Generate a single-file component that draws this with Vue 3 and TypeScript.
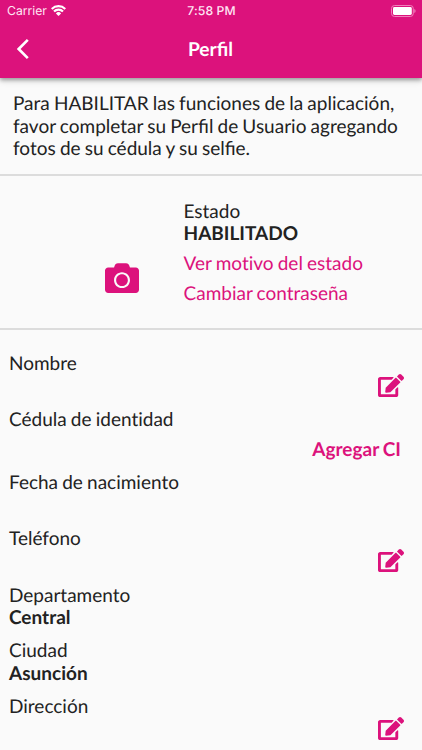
<script setup lang="ts">
interface Field {
  key: string
  label: string
  value?: string
  editable?: boolean
  action?: string
}

const fields: Field[] = [
  { key: 'nombre', label: 'Nombre', editable: true },
  { key: 'cedula', label: 'Cédula de identidad', action: 'Agregar CI' },
  { key: 'nacimiento', label: 'Fecha de nacimiento' },
  { key: 'telefono', label: 'Teléfono', editable: true },
  { key: 'departamento', label: 'Departamento', value: 'Central' },
  { key: 'ciudad', label: 'Ciudad', value: 'Asunción' },
  { key: 'direccion', label: 'Dirección', editable: true },
]
</script>

<template>
  <div class="screen">
    <header class="header">
      <div class="status">
        <div class="carrier">
          <span>Carrier</span>
          <svg class="wifi" viewBox="0 0 15 11" aria-hidden="true">
            <path d="M0.7 4A9.7 9.7 0 0 1 14.3 4M3 6.5A6.5 6.5 0 0 1 12 6.5" />
            <path class="dot" d="M7.5 11L4.9 8.4A3.7 3.7 0 0 1 10.1 8.4Z" />
          </svg>
        </div>
        <span class="time">7:58 PM</span>
        <svg class="battery" viewBox="0 0 25 12" aria-hidden="true">
          <rect class="shell" x="0.5" y="0.5" width="21.8" height="11" rx="3" />
          <rect class="charge" x="2" y="2" width="18.8" height="8" rx="1.4" />
          <path class="tip" d="M23.4 4V8C24.9 7.3 24.9 4.7 23.4 4Z" />
        </svg>
      </div>
      <div class="nav">
        <button class="back" aria-label="Atrás">
          <svg viewBox="0 0 12 20" aria-hidden="true"><path d="M10.8 0.9L1.7 10L10.8 19.1" /></svg>
        </button>
        <h1>Perfil</h1>
      </div>
    </header>

    <p class="notice">
      Para HABILITAR las funciones de la aplicación,<br />
      favor completar su Perfil de Usuario agregando<br />
      fotos de su cédula y su selfie.
    </p>

    <section class="account">
      <svg class="camera" viewBox="0 32 512 448" aria-hidden="true">
        <path d="M512 144v288c0 26.500-21.500 48-48 48H48c-26.500 0-48-21.500-48-48V144c0-26.500 21.500-48 48-48h88l12.300-32.900c7-18.700 24.900-31.100 44.900-31.100h125.500c20 0 37.900 12.400 44.900 31.100L376 96h88c26.500 0 48 21.500 48 48zM376 288c0-66.200-53.800-120-120-120s-120 53.800-120 120 53.800 120 120 120 120-53.800 120-120zm-32 0c0 48.500-39.500 88-88 88s-88-39.500-88-88 39.500-88 88-88 88 39.500 88 88z" />
      </svg>
      <div class="state">
        <span>Estado</span>
        <strong>HABILITADO</strong>
        <a class="link">Ver motivo del estado</a>
        <a class="link">Cambiar contraseña</a>
      </div>
    </section>

    <section class="fields">
      <div v-for="field in fields" :key="field.key" class="field" :class="field.key">
        <div class="text">
          <span>{{ field.label }}</span>
          <strong v-if="field.value">{{ field.value }}</strong>
        </div>
        <svg v-if="field.editable" class="edit" viewBox="0 0 576 512" aria-hidden="true">
          <path d="M402.600 83.200l90.200 90.200c3.800 3.800 3.800 10 0 13.800L274.400 405.600l-92.800 10.300c-12.400 1.400-22.900-9.100-21.500-21.500l10.300-92.800L388.800 83.200c3.800-3.800 10-3.800 13.800 0zm162-22.900l-48.800-48.800c-15.200-15.200-39.900-15.200-55.200 0l-35.400 35.400c-3.800 3.800-3.800 10 0 13.800l90.200 90.200c3.800 3.800 10 3.800 13.800 0l35.400-35.400c15.200-15.300 15.200-40 0-55.200zM384 346.200V448H64V128h229.800c3.200 0 6.200-1.300 8.500-3.500l40-40c7.600-7.600 2.200-20.500-8.500-20.500H48C21.500 64 0 85.500 0 112v352c0 26.500 21.500 48 48 48h352c26.500 0 48-21.500 48-48V306.200c0-10.700-12.900-16-20.500-8.500l-40 40c-2.200 2.300-3.500 5.300-3.500 8.500z" />
        </svg>
        <a v-if="field.action" class="action">{{ field.action }}</a>
      </div>
    </section>
  </div>
</template>

<style>
body {
  background: #fafafa;
  overflow: hidden;
}
</style>

<style scoped>
.screen {
  box-sizing: border-box;
  height: 750px;
  overflow: hidden;
  background: #fafafa;
  color: #222;
  font: 19px/22.5px Lato, sans-serif;
  word-spacing: -0.7px;
  text-rendering: geometricPrecision;
}

.header {
  position: relative;
  height: 77.6px;
  background: #dc127c;
  color: #fff;
  box-shadow: 0 2px 4px rgba(0, 0, 0, 0.32), 0 3px 7px rgba(0, 0, 0, 0.12);
}

.status {
  display: grid;
  grid-template-columns: 1fr auto 1fr;
  align-items: center;
  height: 21px;
  padding: 0 6px 0 7px;
  font: 12.2px/21px Inter, sans-serif;
  word-spacing: 0;
  color: #ffe6f4;
}

.carrier {
  display: flex;
  align-items: center;
  gap: 4.5px;
}

.wifi {
  width: 15px;
  height: 11px;
  fill: none;
  stroke: #fff;
  stroke-width: 2.2;
}

.dot {
  fill: #fff;
  stroke: none;
}

.time {
  font-weight: 500;
  letter-spacing: 0.1px;
}

.battery {
  justify-self: end;
  width: 25px;
  height: 12px;
}

.shell {
  fill: none;
  stroke: #f07fbb;
}

.charge {
  fill: #fff;
}

.tip {
  fill: #f290c5;
}

.nav {
  display: grid;
  grid-template-columns: 1fr auto 1fr;
  align-items: center;
  height: 56.6px;
}

.back {
  display: flex;
  width: 12px;
  margin: 0 0 0 17px;
  padding: 0;
  border: 0;
  background: none;
}

.back svg {
  width: 12px;
  height: 20px;
  fill: none;
  stroke: #fff;
  stroke-width: 2.6;
}

h1 {
  margin: 0;
  padding: 2px 1px 0 0;
  font-size: 19.2px;
  font-weight: 700;
}

.notice {
  box-sizing: border-box;
  height: 98.4px;
  margin: 0;
  padding: 15.8px 0 0 13px;
  border-bottom: 2px solid #dcdcdc;
  white-space: nowrap;
}

.account {
  box-sizing: border-box;
  display: flex;
  height: 154px;
  padding: 25px 0 0 105px;
  border-bottom: 2px solid #dcdcdc;
  font-variant-ligatures: none;
}

.camera {
  width: 34px;
  height: 30px;
  margin: 62px 44.5px 0 0;
  fill: #dc127c;
}

.state {
  display: flex;
  flex-direction: column;
}

strong {
  font-weight: 700;
}

.link {
  margin-top: 7.2px;
  color: #dc127c;
}

.fields {
  padding: 23px 18px 0 9px;
  font-variant-ligatures: none;
}

.field {
  display: flex;
  justify-content: space-between;
  height: 56px;
}

.text {
  display: flex;
  flex-direction: column;
}

.edit {
  width: 26px;
  height: 23.2px;
  margin-top: 21px;
  fill: #dc127c;
}

.action {
  margin: 30px 3px 0 0;
  color: #dc127c;
  font-weight: 700;
}

.cedula {
  height: 63.2px;
}

.telefono {
  height: 56.6px;
}

.departamento,
.ciudad {
  height: 55.7px;
}
</style>
